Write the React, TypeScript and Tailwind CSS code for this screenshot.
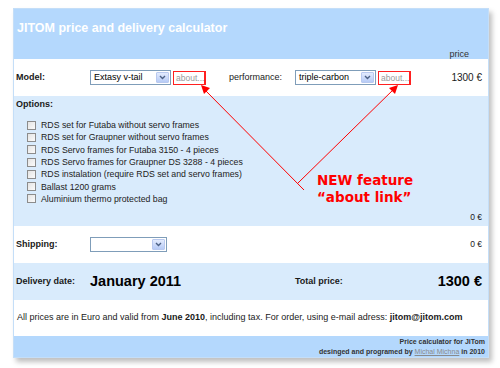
import React from 'react';

const options = [
  'RDS set for Futaba without servo frames',
  'RDS set for Graupner without servo frames',
  'RDS Servo frames for Futaba 3150 - 4 pieces',
  'RDS Servo frames for Graupner DS 3288 - 4 pieces',
  'RDS instalation (require RDS set and servo frames)',
  'Ballast 1200 grams',
  'Aluminium thermo protected bag',
];

const Select: React.FC<{ value?: string; width: string }> = ({ value, width }) => (
  <div className={`${width} h-[15px] flex items-stretch border border-[#7f9db9] bg-white`}>
    <div className="flex-1 pl-[3px] text-[9px] leading-[13px] text-black truncate">{value}</div>
    <div className="w-[13px] m-px flex items-center justify-center rounded-[1px] border border-[#b9c9ef] bg-gradient-to-b from-[#e3ebfd] to-[#b7cbf6]">
      <svg width="7" height="5" viewBox="0 0 7 5">
        <path d="M1 1 L3.5 3.5 L6 1" fill="none" stroke="#4d6185" strokeWidth="1.4" />
      </svg>
    </div>
  </div>
);

const About: React.FC = () => (
  <div className="w-[33px] h-[14px] ml-[2px] border border-[#ff2020] border-r-2 text-[8.5px] leading-[12px] text-[#999] pl-[2px]">
    about...
  </div>
);

export default function App() {
  return (
    <div className="relative w-[500px] h-[368px] bg-white font-['Liberation_Sans',Arial,sans-serif] text-[#1a1a1a]">
      <div className="absolute left-0 top-0 w-full h-full pt-[8px] pl-[13px]">
        <div className="w-[476px] border border-[#c4def8] shadow-[3px_4px_5px_rgba(0,0,0,0.25)] bg-white">
          {/* header */}
          <div className="h-[50px] bg-[#b4d8fd] flex flex-col px-[3px]">
            <div className="pt-[12px] text-[12.5px] leading-[14px] font-bold text-white">
              JITOM price and delivery calculator
            </div>
            <div className="mt-auto pr-[16px] text-right text-[9px] leading-[10px] text-[#333]">price</div>
          </div>

          {/* model row */}
          <div className="h-[37px] flex items-center pl-[2px] pr-[6px]">
            <div className="w-[74px] text-[9px] font-bold">Model:</div>
            <Select value="Extasy v-tail" width="w-[81px]" />
            <About />
            <div className="w-[66px] ml-[23px] text-[9px]">performance:</div>
            <Select value="triple-carbon" width="w-[81px]" />
            <About />
            <div className="flex-1 text-right text-[10px]">1300 €</div>
          </div>

          {/* options */}
          <div className="h-[130px] bg-[#d9ebfc] flex flex-col pl-[2px] pr-[6px]">
            <div className="pt-[2px] text-[9px] leading-[12px] font-bold">Options:</div>
            <div className="mt-[9px] pl-[11px] flex flex-col">
              {options.map((o) => (
                <div key={o} className="h-[12.3px] flex items-center">
                  <div className="w-[9px] h-[9px] border border-[#8c8c8c] bg-gradient-to-br from-[#e4e4e4] to-[#fbfbfb]" />
                  <span className="ml-[5px] text-[8.75px] leading-[10px] text-[#222]">{o}</span>
                </div>
              ))}
            </div>
            <div className="mt-auto pb-[4px] text-right text-[8.5px] leading-[10px]">0 €</div>
          </div>

          {/* shipping */}
          <div className="h-[37px] flex items-center pl-[2px] pr-[6px]">
            <div className="w-[74px] text-[9px] font-bold">Shipping:</div>
            <Select width="w-[77px]" />
            <div className="flex-1 text-right text-[8.5px]">0 €</div>
          </div>

          {/* delivery */}
          <div className="h-[37px] bg-[#d9ebfc] flex items-center pl-[2px] pr-[6px]">
            <div className="w-[74px] text-[9px] font-bold">Delivery date:</div>
            <div className="w-[205px] text-[14.5px] font-bold text-black">January 2011</div>
            <div className="text-[9px] font-bold">Total price:</div>
            <div className="flex-1 text-right text-[14.5px] font-bold text-black">1300 €</div>
          </div>

          {/* note */}
          <div className="h-[36px] flex items-center pl-[3px] text-[9px]">
            <span>
              All prices are in Euro and valid from <b>June 2010</b>, including tax. For order, using e-mail adress:{' '}
              <b>jitom@jitom.com</b>
            </span>
          </div>

          {/* footer */}
          <div className="h-[21px] bg-[#b4d8fd] flex flex-col justify-center pr-[3px] text-right text-[7px] leading-[10px] font-bold text-[#333]">
            <div>Price calculator for JiTom</div>
            <div>
              desinged and programed by <span className="underline text-[#8a8a8a] font-normal">Michal Michna</span> in 2010
            </div>
          </div>
        </div>
      </div>

      {/* annotation */}
      <svg className="absolute left-0 top-0 pointer-events-none" width="500" height="368" viewBox="0 0 500 368">
        <line x1="304" y1="190" x2="203" y2="88" stroke="#ff0000" strokeWidth="1" />
        <line x1="298" y1="183" x2="396" y2="87" stroke="#ff0000" strokeWidth="1" />
        <polygon points="201,85 210,88 204,94" fill="#ff0000" />
        <polygon points="398,85 389,88 395,94" fill="#ff0000" />
      </svg>
      <div className="absolute left-[317px] top-[172px] font-['DejaVu_Sans',Verdana,sans-serif] text-[13.5px] leading-[17px] font-bold text-[#ff0000]">
        <div>NEW feature</div>
        <div>“about link”</div>
      </div>
    </div>
  );
}
